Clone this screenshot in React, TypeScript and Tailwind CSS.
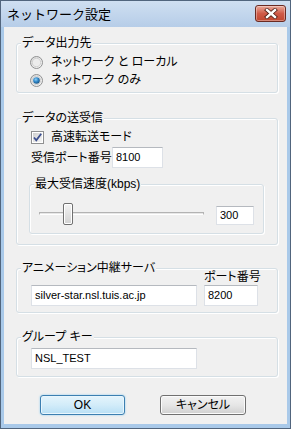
import React from "react";

function Radio({ checked }: { checked?: boolean }) {
  return (
    <svg width="13" height="13" viewBox="0 0 13 13" className="shrink-0">
      <defs>
        <linearGradient id={checked ? "rg1" : "rg0"} x1="0" y1="0" x2="1" y2="1">
          <stop offset="0" stopColor="#d6d6d6" />
          <stop offset="1" stopColor="#fafafa" />
        </linearGradient>
        <radialGradient id="dot" cx="0.4" cy="0.35" r="0.7">
          <stop offset="0" stopColor="#8fd0f5" />
          <stop offset="0.5" stopColor="#2f87c9" />
          <stop offset="1" stopColor="#1b4f7a" />
        </radialGradient>
      </defs>
      <circle cx="6.5" cy="6.5" r="6" fill={checked ? "url(#rg1)" : "url(#rg0)"} stroke="#8f9091" />
      <circle cx="6.5" cy="6.5" r="4.2" fill="#ececec" stroke="#c9c9c9" strokeWidth="0.8" />
      {checked && <circle cx="6.5" cy="6.5" r="3.3" fill="url(#dot)" />}
    </svg>
  );
}

function Checkbox() {
  return (
    <svg width="13" height="13" viewBox="0 0 13 13" className="shrink-0">
      <defs>
        <linearGradient id="cb" x1="0" y1="0" x2="1" y2="1">
          <stop offset="0" stopColor="#cfcfcf" />
          <stop offset="1" stopColor="#f6f6f6" />
        </linearGradient>
      </defs>
      <rect x="0.5" y="0.5" width="12" height="12" fill="#fff" stroke="#8f9091" />
      <rect x="2" y="2" width="9" height="9" fill="url(#cb)" />
      <path d="M3 6.5 L5.3 9.3 L10.2 2.8" fill="none" stroke="#3c4f8f" strokeWidth="1.8" />
    </svg>
  );
}

function Field({ value, className }: { value: string; className: string }) {
  return (
    <div
      className={
        "flex items-center border border-[#dde1e7] border-t-[#b5b9bf] bg-white pl-[3px] text-[11px] font-['Liberation_Sans','Noto_Sans_CJK_JP',sans-serif] " +
        className
      }
    >
      {value}
    </div>
  );
}

function Group({
  label,
  className,
  children,
}: {
  label: string;
  className: string;
  children?: React.ReactNode;
}) {
  return (
    <div
      className={
        "relative rounded-[3px] border border-[#d5dfe5] shadow-[inset_1px_1px_0_#fff,1px_1px_0_#fff] " +
        className
      }
    >
      <span className="absolute -top-[9px] left-[4px] bg-[#f0f0f0] px-[1px] leading-[16px]">
        {label}
      </span>
      {children}
    </div>
  );
}

export default function App() {
  return (
    <div className="flex h-[429px] w-[291px] flex-col border border-[#51657d] bg-[#a9c9e9] text-[12px] text-black font-['Liberation_Sans','Noto_Sans_CJK_JP',sans-serif] [font-feature-settings:'palt']">
      {/* Title bar */}
      <div className="flex h-[26px] items-start justify-between bg-linear-to-b from-[#cfdff1] to-[#b6cde8] pl-[6px] pr-[4px]">
        <span className="mt-[5px] text-[13px] leading-[17px] [font-feature-settings:normal]">
          ネットワーク設定
        </span>
        <div className="mt-[4px] flex h-[17px] w-[31px] items-center justify-center rounded-[3px] border border-[#6a2a22] bg-linear-to-b from-[#e9a99a] via-[#cf5a48] to-[#c0462f] shadow-[inset_0_0_0_1px_rgba(255,255,255,0.35)]">
          <svg width="14" height="11" viewBox="0 0 14 11">
            <path d="M3 2 L11 9 M11 2 L3 9" stroke="#4a1a12" strokeWidth="4" strokeLinecap="square" />
            <path d="M3 2 L11 9 M11 2 L3 9" stroke="#fff" strokeWidth="2.4" strokeLinecap="square" />
          </svg>
        </div>
      </div>

      {/* Client area */}
      <div className="mx-[3px] mb-[4px] flex flex-1 flex-col bg-[#f0f0f0] pl-[12px]">
        <Group label="データ出力先" className="mt-[16px] h-[50px] w-[262px]">
          <div className="flex flex-col pl-[13px] pt-[9px]">
            <div className="flex h-[18px] items-center gap-[8px]">
              <Radio />
              <span>ネットワーク と ローカル</span>
            </div>
            <div className="flex h-[18px] items-center gap-[8px]">
              <Radio checked />
              <span>ネットワーク のみ</span>
            </div>
          </div>
        </Group>

        <Group label="データの送受信" className="mt-[25px] h-[127px] w-[262px]">
          <div className="flex flex-col pt-[9px]">
            <div className="flex h-[18px] items-center gap-[7px] pl-[14px]">
              <Checkbox />
              <span>高速転送モード</span>
            </div>
            <div className="mt-[1px] flex items-center pl-[14px]">
              <span className="w-[81px]">受信ポート番号</span>
              <Field value="8100" className="h-[21px] w-[51px]" />
            </div>
            <Group label="最大受信速度(kbps)" className="ml-[12px] mt-[16px] h-[50px] w-[235px]">
              <div className="flex items-end gap-[12px] pl-[9px] pt-[18px]">
                <div className="relative h-[22px] w-[165px]">
                  <div className="absolute left-0 top-[9px] h-[3px] w-full border border-[#b3b3b3] border-b-white bg-[#e7e7e7]" />
                  <div className="absolute left-[24px] top-0 h-[22px] w-[10px] rounded-[2px] border border-[#707070] bg-linear-to-b from-[#f4f4f4] to-[#d2d2d2] shadow-[inset_0_0_0_1px_#fff]" />
                </div>
                <Field value="300" className="h-[19px] w-[38px]" />
              </div>
            </Group>
          </div>
        </Group>

        <Group label="アニメーション中継サーバ" className="mt-[23px] h-[45px] w-[262px]">
          <div className="flex items-end gap-[7px] pl-[14px]">
            <Field value="silver-star.nsl.tuis.ac.jp" className="h-[21px] w-[166px]" />
            <div className="flex flex-col">
              <span className="leading-[16px]">ポート番号</span>
              <Field value="8200" className="h-[21px] w-[54px]" />
            </div>
          </div>
        </Group>

        <Group label="グループ キー" className="mt-[24px] h-[40px] w-[262px]">
          <div className="pl-[14px] pt-[10px]">
            <Field value="NSL_TEST" className="h-[21px] w-[166px]" />
          </div>
        </Group>

        <div className="mt-[18px] flex gap-[35px] pl-[24px]">
          <button className="flex h-[20px] w-[85px] items-center justify-center rounded-[3px] border border-[#3c7fb1] bg-linear-to-b from-[#e5f4fc] via-[#d2ecf9] to-[#b8dff5] shadow-[0_0_2px_#7fc6ee,inset_0_0_0_1px_#e8f6fd]">
            OK
          </button>
          <button className="flex h-[20px] w-[86px] items-center justify-center rounded-[3px] border border-[#707070] bg-linear-to-b from-[#f2f2f2] via-[#e6e6e6] to-[#d0d0d0] shadow-[inset_0_0_0_1px_#fbfbfb]">
            キャンセル
          </button>
        </div>
      </div>
    </div>
  );
}
